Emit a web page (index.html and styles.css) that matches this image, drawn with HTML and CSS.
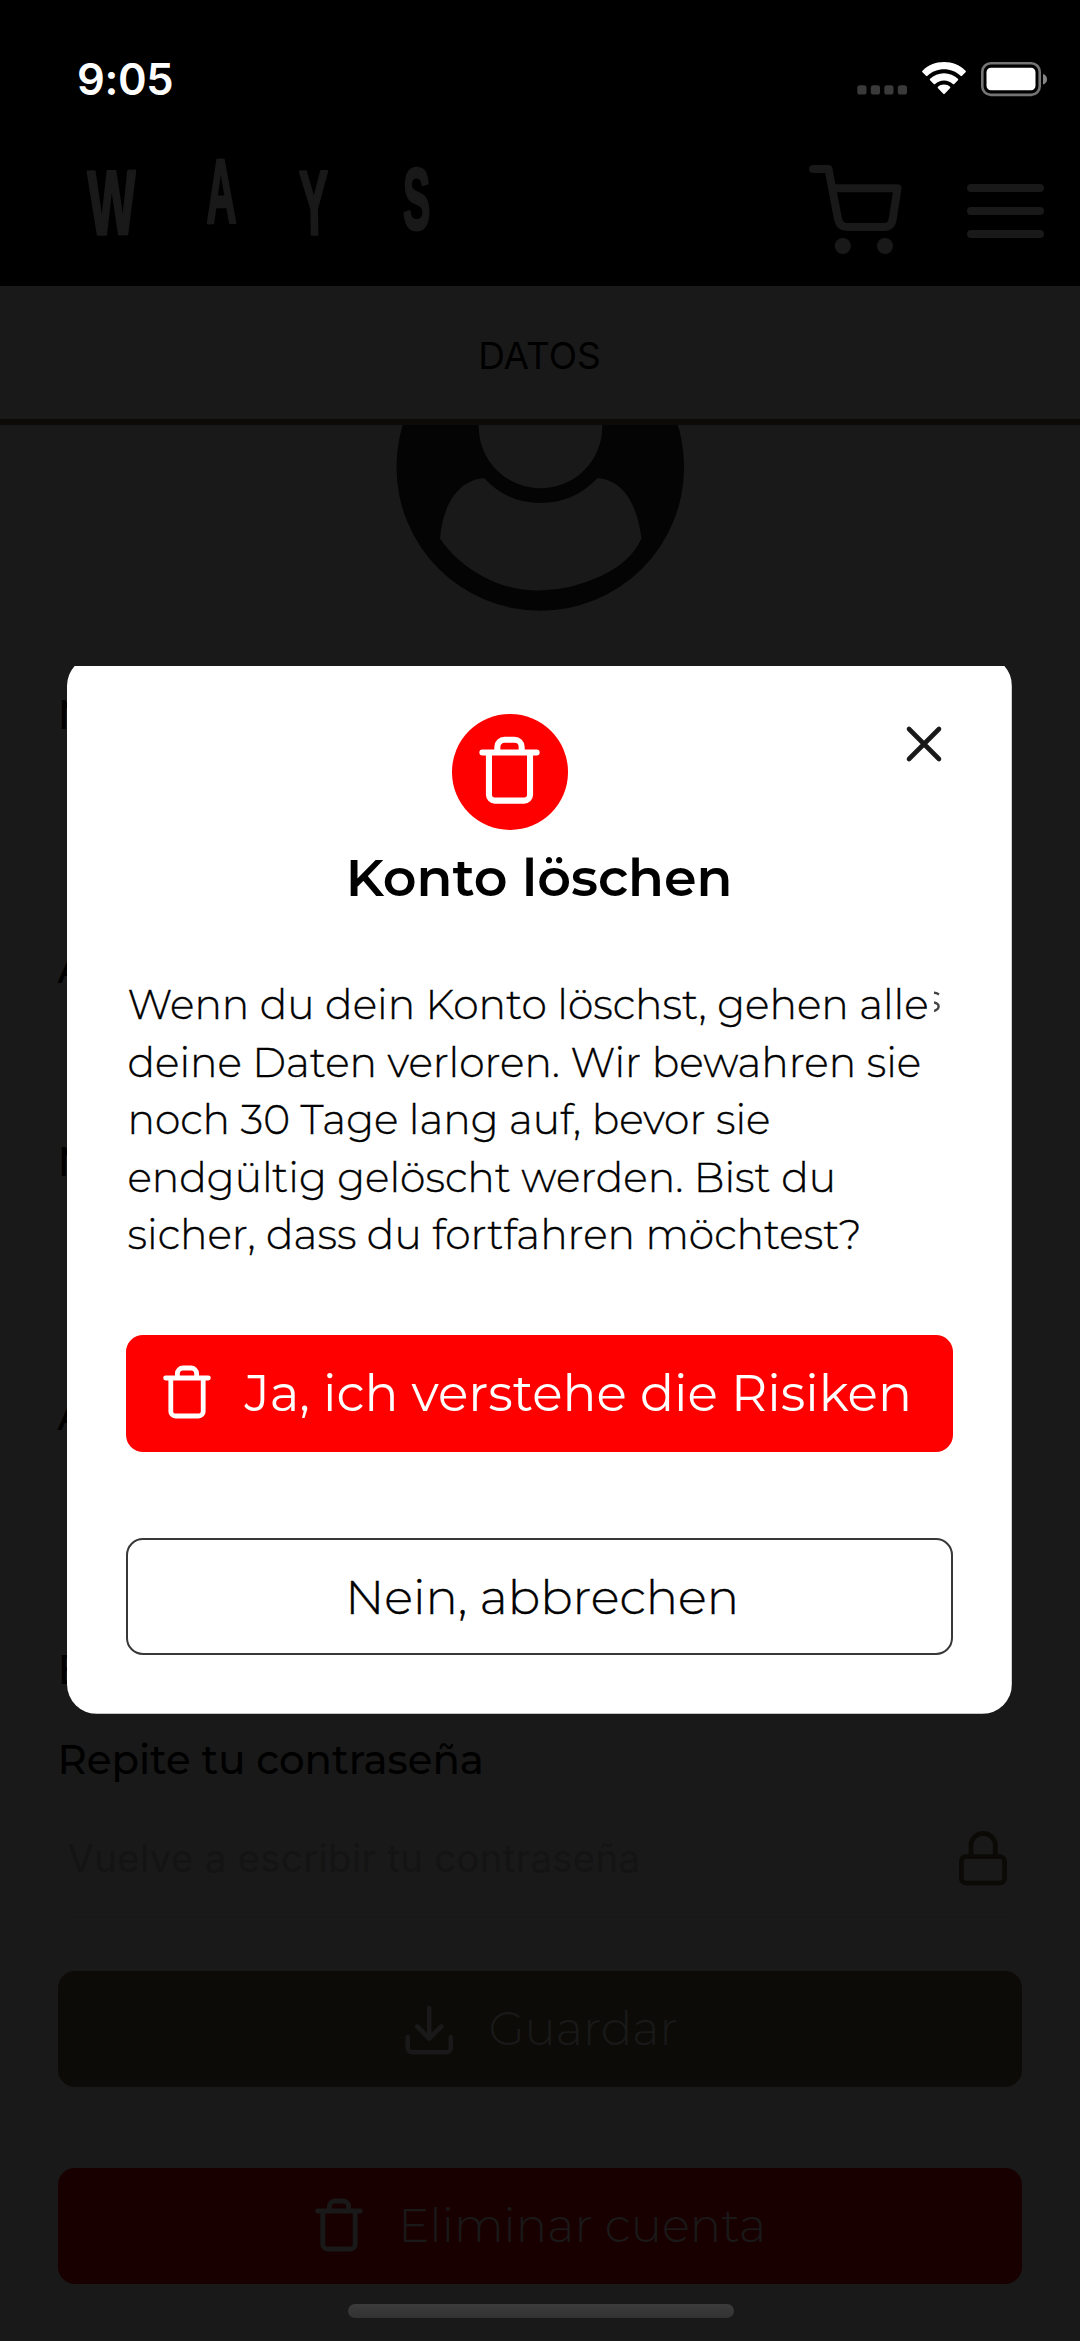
FILE: index.html
```html
<!DOCTYPE html>
<html lang="de">
<head>
<meta charset="utf-8">
<title>Konto löschen</title>
<link rel="stylesheet" href="styles.css">
</head>
<body>
<svg class="defs" aria-hidden="true">
  <symbol id="trash" viewBox="0 0 24 28">
    <path d="M1.3 6.500H22.700M3.900 6.500V23.200a2.300 2.300 0 0 0 2.300 2.300H17.800a2.300 2.300 0 0 0 2.300-2.300V6.500M7.200 6.500V4.300a2.800 2.800 0 0 1 2.800-2.800h4A2.800 2.800 0 0 1 16.800 4.300v2.200" fill="none" stroke="currentColor" stroke-width="2.4" stroke-linecap="round" stroke-linejoin="round"/>
  </symbol>
</svg>
<div class="screen">
  <div class="statusbar">
    <span class="time">9:05</span>
    <div class="indicators">
      <svg width="51" height="10" viewBox="0 0 51 10" fill="#3a3a3a"><rect x="0.3" y="0.3" width="9.2" height="9.2" rx="2.6"/><rect x="13.8" y="0.3" width="9.2" height="9.2" rx="2.6"/><rect x="27.3" y="0.3" width="9.2" height="9.2" rx="2.6"/><rect x="40.8" y="0.3" width="9.2" height="9.2" rx="2.6"/></svg>
      <svg class="wifi" width="44" height="33" viewBox="0 0 44 33" fill="#fff"><path d="M22 0C13.5 0 5.800 3.300 0.500 8.700a1 1 0 0 0 0 1.500L4 13.800a1 1 0 0 0 1.500 0C9.900 9.600 15.700 7.300 22 7.300s12.100 2.300 16.500 6.500a1 1 0 0 0 1.500 0l3.500-3.600a1 1 0 0 0 0-1.500C38.200 3.300 30.500 0 22 0z"/><path d="M22 11.300c-5.400 0-10.200 2.100-13.900 5.500a1 1 0 0 0 0 1.500l3.600 3.600a1 1 0 0 0 1.500 0c2.400-2.100 5.400-3.400 8.800-3.400s6.400 1.300 8.800 3.400a1 1 0 0 0 1.500 0l3.600-3.600a1 1 0 0 0 0-1.500C32.200 13.400 27.400 11.300 22 11.300z"/><path d="M22 22.400c-2.400 0-4.500.9-6 2.300a1 1 0 0 0 0 1.500l5.300 5.600a1 1 0 0 0 1.400 0l5.300-5.600a1 1 0 0 0 0-1.500c-1.500-1.400-3.600-2.300-6-2.300z"/></svg>
      <svg class="battery" width="68" height="35" viewBox="0 0 68 35"><rect x="1.300" y="1.300" width="57.400" height="31.600" rx="8.500" fill="none" stroke="#757575" stroke-width="2.600"/><rect x="5.500" y="5.700" width="49" height="22.600" rx="4.500" fill="#fff"/><path d="M62 12c5.400 1.600 5.400 9 0 10.600z" fill="#858585"/></svg>
    </div>
  </div>
  <header class="header">
    <svg class="logo" width="348" height="80" viewBox="0 0 348 80">
      <text transform="translate(4.500 75.500) rotate(-1) scale(.56 1)">W</text>
      <text transform="translate(122.500 64) rotate(-1) scale(.46 1)">A</text>
      <text transform="translate(216 75.500) rotate(-1) scale(.48 1)">Y</text>
      <text transform="translate(319 69.500) scale(.45 .96)">S</text>
    </svg>
    <svg class="cart" width="96" height="92" viewBox="0 0 96 92" fill="none" stroke="#191919" stroke-width="8" stroke-linecap="round" stroke-linejoin="round"><path d="M6 7H21.500L31 57q1.700 8 9 8H77q7.500 0 8.700-8L90.500 26.300H26"/><g fill="#191919" stroke="none"><circle cx="35.800" cy="84" r="8"/><circle cx="78" cy="84" r="8"/></g></svg>
    <div class="menu"><i></i><i></i><i></i></div>
  </header>
  <nav class="tabs">DATOS</nav>
  <main class="content">
    <div class="avatar">
      <svg width="290" height="186" viewBox="395 425 290 186"><circle cx="540.300" cy="467" r="143.800" fill="#040404"/><circle cx="540.500" cy="426.500" r="61.800" fill="#191919"/><path d="M484 478C460 480 443 502 440 538.500Q455 561 482 576T540 590.500T601 576T641.500 538.500C637 502 622 480 597.500 478Q574 503 540.500 503T484 478z" fill="#191919"/></svg>
    </div>
    <form class="form">
      <label class="field">N</label>
      <label class="field short">A</label>
      <label class="field">N</label>
      <label class="field">A</label>
      <label class="field tight">E</label>
      <label class="label">Repite tu contraseña</label>
      <div class="input">
        <span class="placeholder">Vuelve a escribir tu contraseña</span>
        <svg width="50" height="56" viewBox="0 0 50 56" fill="none" stroke="#0b0a06" stroke-width="4.700"><rect x="3.400" y="26.700" width="43.200" height="26.300" rx="4.500"/><path d="M13 26V15.500a12 12 0 0 1 24.300 0V26"/></svg>
      </div>
      <div class="button save">
        <svg width="50" height="52" viewBox="0 0 50 52" fill="none" stroke="#191919" stroke-width="4.600" stroke-linecap="round" stroke-linejoin="round"><path d="M3.700 34V44.700a4.500 4.500 0 0 0 4.500 4.500H42.300a4.500 4.500 0 0 0 4.500-4.500V34M25.200 5V35.500M13.200 23.500L25.200 35.500L37.200 23.500"/></svg>
        <span>Guardar</span>
      </div>
      <div class="button remove">
        <svg width="48" height="56"><use href="#trash"/></svg>
        <span>Eliminar cuenta</span>
      </div>
    </form>
  </main>

  <section class="modal" role="dialog">
    <div class="badge"><svg width="61" height="71"><use href="#trash"/></svg></div>
    <svg class="close" width="38" height="38" viewBox="0 0 38 38" stroke="#191919" stroke-width="4.600" stroke-linecap="round"><path d="M4 4L34 34M34 4L4 34"/></svg>
    <h1>Konto löschen</h1>
    <p class="message">Wenn du dein Konto löschst, gehen alle<br>deine Daten verloren. Wir bewahren sie<br>noch 30 Tage lang auf, bevor sie<br>endgültig gelöscht werden. Bist du<br>sicher, dass du fortfahren möchtest?</p>
    <svg class="remnant" width="6" height="22" viewBox="0 0 6 22" fill="none" stroke="#444" stroke-width="2.400"><path d="M0 1.800Q2.500 1.800 5 3.500M0 11.500Q4.600 12.500 4.600 15.500T0 20"/></svg>
    <div class="modal-button confirm">
      <svg width="48" height="56"><use href="#trash"/></svg>
      <span>Ja, ich verstehe die Risiken</span>
    </div>
    <div class="modal-button cancel"><span>Nein, abbrechen</span></div>
  </section>
  <div class="home-indicator"></div>
</div>
</body>
</html>
```
FILE: styles.css
```css
* { box-sizing: border-box; }
body { margin: 0; background: #191919; font-family: Montserrat, Inter, "Open Sans", sans-serif; }
svg { display: block; flex: none; }
.defs { position: absolute; width: 0; height: 0; }
.screen { position: relative; width: 1080px; height: 2341px; overflow: hidden; background: #191919; }

.statusbar { height: 159px; padding: 0 31px 0 77px; background: #000; display: flex; justify-content: space-between; }
.time { padding-top: 49px; font: 600 43.500px/60px Inter, sans-serif; letter-spacing: -.4px; color: #fff; }
.indicators { display: flex; padding-top: 62px; }
.indicators svg:first-child { margin-top: 23px; }
.wifi { margin-left: 14px; }
.battery { margin-left: 15px; }

.header { height: 127px; padding-left: 84px; background: #000; display: flex; }
.logo { font: bold 91px "Liberation Sans", Arial, sans-serif; fill: #191919; stroke: #191919; stroke-width: 3px; stroke-linejoin: round; overflow: visible; }
.cart { margin: 3px 0 0 375px; }
.menu { margin: 25px 0 0 64px; width: 77px; display: flex; flex-direction: column; gap: 15.200px; }
.menu i { height: 8px; border-radius: 4px; background: #191919; }

.tabs { height: 139px; border-bottom: 6px solid #0c0b07; text-align: center; font: 400 37px/139px Inter, sans-serif; color: #000; padding-right: 1px; }

.avatar { height: 265.500px; padding-left: 395px; }
.form { padding: 0 58px 0 57.500px; }
.field, .label { display: block; height: 254px; font-size: 40.300px; line-height: 48px; font-weight: 500; color: #000; }
.field.short { height: 193px; }
.field.tight { height: 90px; }
.label { height: 63px; }
.input { height: 119px; margin: 0 14px 0 10px; border-bottom: 1px solid #171717; display: flex; align-items: center; justify-content: space-between; }
.placeholder { font: 400 38.500px/48px Inter, sans-serif; letter-spacing: .25px; color: #141414; }
.button { height: 116px; border-radius: 17px; display: flex; align-items: center; justify-content: center; padding-left: 2px; font-weight: 300; font-size: 46.700px; color: #191919; }
.save { margin-top: 53px; background: #0c0b07; }
.remove { margin-top: 81px; background: #190000; }
.button svg { margin-right: 35px; }

.modal { position: absolute; left: 66.500px; top: 656px; width: 945.300px; height: 1057.700px; padding: 58px 59px 0; background: #fff; border-radius: 30px; clip-path: inset(10px 0 0 0); color: #000; }
.badge { width: 115.500px; height: 115.500px; margin-left: 326.500px; border-radius: 50%; background: #f00; color: #fff; display: flex; align-items: center; justify-content: center; }
.close { position: absolute; left: 838.500px; top: 68.500px; }
h1 { margin: 15px 0 0; font-size: 52.400px; line-height: 64px; font-weight: 600; text-align: center; }
.message { margin: 67.500px 0 0 2px; font-size: 40.800px; line-height: 57.600px; font-weight: 300; -webkit-text-stroke: .35px #000; white-space: nowrap; }
.remnant { position: absolute; left: 867.500px; top: 335px; }
.modal-button { height: 117px; border-radius: 17px; display: flex; align-items: center; }
.confirm { margin-top: 71px; padding-left: 37px; background: #f00; color: #fff; font-size: 50.200px; font-weight: 400; white-space: nowrap; }
.confirm svg { margin-right: 34px; }
.cancel { margin-top: 86.500px; border: 2px solid #383838; justify-content: center; font-size: 48px; font-weight: 300; -webkit-text-stroke: .35px #000; padding-left: 6px; }

.home-indicator { position: absolute; left: 347.500px; top: 2303.500px; width: 386px; height: 14.500px; border-radius: 7.500px; background: linear-gradient(#3b3b3b, #323232); }
```
